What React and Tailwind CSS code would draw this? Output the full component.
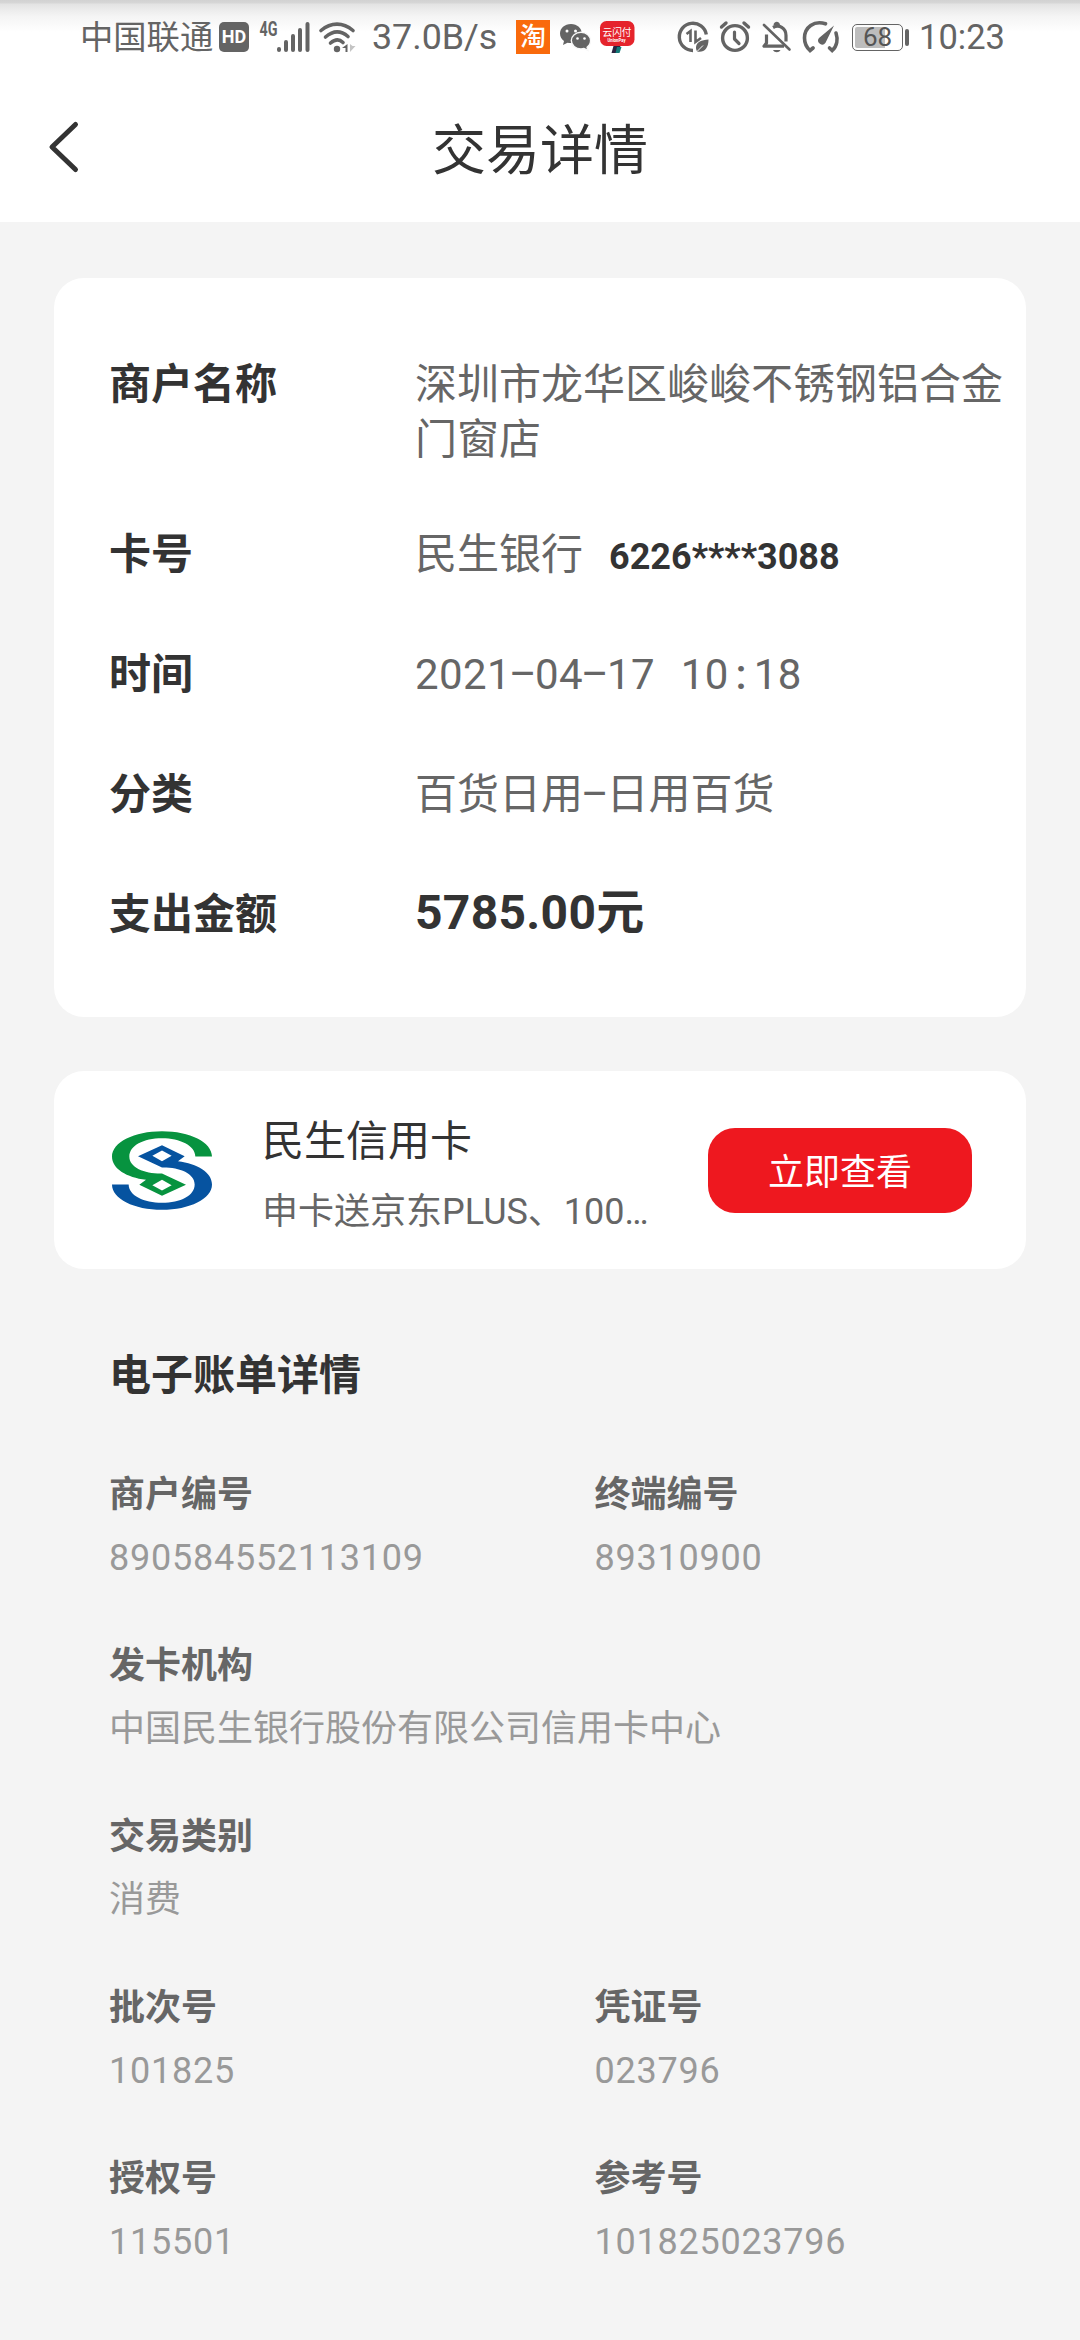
import React from "react";

const INK = "#646464";

function HdBadge() {
  return (
    <div className="ml-[6px] flex h-[30px] w-[30px] items-center justify-center rounded-[5px] bg-[#646464] text-[18px] leading-none font-bold text-white">
      HD
    </div>
  );
}

function SignalIcon() {
  return (
    <svg className="ml-[9px] shrink-0" width="53" height="46" viewBox="258 13 53 46">
      <text x="259.500" y="35" fontSize="19.500" fontWeight="700" fill={INK} textLength="18" lengthAdjust="spacingAndGlyphs">4G</text>
      <g stroke={INK} strokeWidth="4" strokeLinecap="round">
        <path d="M279 48v1M286 41v8M293 35v14M300 29v20M307.500 23v26" />
      </g>
    </svg>
  );
}

function WifiIcon() {
  return (
    <svg className="ml-[7px] shrink-0" width="40" height="32" viewBox="318 20 40 32">
      <g fill="none" stroke={INK} strokeWidth="3.600" strokeLinecap="round">
        <path d="M321 29.500C331 21 343 21 353 29.500" />
        <path d="M325.500 36C333 29.500 341 29.500 348 35.500" />
        <path d="M330.500 42C335 38 339.500 38 343 41.500" />
      </g>
      <circle cx="337" cy="48" r="3.200" fill={INK} />
      <path d="M342 47l5.500-4v8h-2v-4z" fill={INK} />
      <path d="M350 43v8l5.500-6h-3z" fill="#c4c4c4" />
    </svg>
  );
}

function WechatIcon() {
  return (
    <svg className="ml-[9px] shrink-0" width="32" height="32" viewBox="559 20 32 32">
      <path d="M571 23c-6.500 0-11 4.300-11 9.600 0 3.100 1.500 5.700 4 7.400l-1 4 4.500-2.300c1.200.3 2.300.4 3.500.4 6.300 0 10.800-4.300 10.800-9.500C581.800 27.300 577.300 23 571 23z" fill={INK} />
      <path d="M581 31.200c-5.400 0-9.700 3.800-9.700 8.400s4.300 8.300 9.700 8.300c1.100 0 2.100-.1 3-.4l4 2-.9-3.200c2.200-1.600 3.500-4 3.500-6.700 0-4.600-4.200-8.400-9.600-8.400z" fill={INK} stroke="#f8f8f8" strokeWidth="1.400" />
      <g fill="#fff">
        <circle cx="567" cy="30" r="1.500" />
        <circle cx="575.500" cy="30" r="1.500" />
        <circle cx="577.500" cy="37.500" r="1.300" />
        <circle cx="584.500" cy="37.500" r="1.300" />
      </g>
    </svg>
  );
}

function QuickPassIcon() {
  return (
    <svg className="ml-[8px] shrink-0" width="36" height="34" viewBox="599 18 36 34">
      <path d="M613.500 44h7l-2 7h-7z" fill="#2b2440" />
      <path d="M617 45h4.500l-2 6h-4z" fill="#147a78" />
      <rect x="600" y="19" width="34.500" height="25" rx="6.500" fill="#e5242c" />
      <text x="602.500" y="33.500" fontSize="10" fill="#fff" textLength="29" lengthAdjust="spacingAndGlyphs">云闪付</text>
      <text x="607.500" y="39.500" fontSize="5" fontWeight="700" fill="#fff" textLength="18" lengthAdjust="spacingAndGlyphs">UnionPay</text>
    </svg>
  );
}

function DataSaverIcon() {
  return (
    <svg className="ml-[41px] shrink-0" width="34" height="34" viewBox="676 19 34 34">
      <path d="M706.300 33.500A13.600 13.600 0 1 0 693 49.500" fill="none" stroke={INK} strokeWidth="3.400" />
      <path d="M686.500 33l4-3v11M695.500 29.500v11.500l5.500-4" fill="none" stroke={INK} strokeWidth="2.600" />
      <path d="M708.500 38.500c-7 .5-12 2.500-12.500 7.500-.1 2 .3 3 1.200 4.500 7 1.200 11.300-3 11.300-12z" fill={INK} />
      <path d="M697 50.500l6-6" stroke="#fff" strokeWidth="1" />
    </svg>
  );
}

function AlarmIcon() {
  return (
    <svg className="ml-[8px] shrink-0" width="34" height="34" viewBox="718 19 34 34">
      <g fill="none" stroke={INK} strokeLinecap="round" strokeLinejoin="round">
        <circle cx="735" cy="37" r="12.400" strokeWidth="3.400" />
        <path d="M734.500 31v7l4.500 4.500" strokeWidth="3.200" />
        <path d="M721.500 26l4.500-4M748.500 26l-4.500-4" strokeWidth="3.400" />
      </g>
    </svg>
  );
}

function BellOffIcon() {
  return (
    <svg className="ml-[9px] shrink-0" width="32" height="34" viewBox="761 19 32 34">
      <g fill="none" stroke={INK} strokeWidth="3.200">
        <path d="M766.500 33.500v8.500l-2.500 3.200h20M773 26.500c6-3.500 13 .5 13 8v6" strokeLinejoin="round" />
        <path d="M764 24l25.500 24.500" strokeLinecap="round" strokeWidth="2.600" />
      </g>
      <path d="M773.500 24.500c0-5 6.500-5 6.500 0" fill={INK} />
      <path d="M773 49h7.500c-1.500 3-6 3-7.500 0z" fill={INK} />
    </svg>
  );
}

function GaugeIcon() {
  return (
    <svg className="ml-[9px] shrink-0" width="40" height="34" viewBox="802 19 40 34">
      <g fill="none" stroke={INK} strokeWidth="3.600" strokeLinecap="round">
        <path d="M825.500 22.800C814 19 804.500 26.500 804.500 37c0 5 2.200 9.500 5.500 12.500l3-2.500" />
        <path d="M836 32c2 6 1.200 13-3.800 17.500l-2.700-2.500" />
      </g>
      <path d="M834 24.500l-8.500 17.300a4 4 0 1 1-6.500-4.800z" fill={INK} />
    </svg>
  );
}

function Battery() {
  return (
    <div className="ml-[10px] flex shrink-0 items-center gap-[2px]">
      <div className="relative flex h-[27px] w-[51px] items-center justify-center rounded-[5px] border-[1.5px] border-[#646464] text-[26px] leading-none text-[#555]">
        <div className="absolute inset-y-[2px] left-[2px] w-[30px] rounded-l-[2px] bg-[#bdbdbd]" />
        <span className="relative">68</span>
      </div>
      <div className="h-[17px] w-[4px] rounded-[2px] bg-[#646464]" />
    </div>
  );
}

function StatusBar() {
  return (
    <div className="flex h-[74px] items-center bg-white bg-[linear-gradient(to_bottom,#d2d2d2_0px,#d6d6d6_3px,#e3e3e3_4px,#f4f4f4_16px,#ffffff_32px)] pl-[80px] text-[#646464]">
      <span className="w-[133px] shrink-0 pt-[2px] text-[33.3px] leading-none whitespace-nowrap">中国联通</span>
      <HdBadge />
      <SignalIcon />
      <WifiIcon />
      <span className="ml-[14px] w-[126px] shrink-0 pt-[2px] text-[35.8px] leading-none whitespace-nowrap">37.0B/s</span>
      <div className="ml-[18px] flex h-[34px] w-[34px] shrink-0 items-center justify-center bg-[#f96a0c] text-[26px] leading-none font-medium text-white">
        淘
      </div>
      <WechatIcon />
      <QuickPassIcon />
      <DataSaverIcon />
      <AlarmIcon />
      <BellOffIcon />
      <GaugeIcon />
      <Battery />
      <span className="ml-[10px] pt-[1px] text-[34.5px] leading-none whitespace-nowrap">10:23</span>
    </div>
  );
}

function Header() {
  return (
    <header className="relative flex h-[148px] items-center justify-center bg-white">
      <svg className="absolute top-[45px] left-[46px]" width="36" height="56" viewBox="46 119 36 56">
        <path d="M75.500 124.500L52 147L75.500 169.500" fill="none" stroke="#333" strokeWidth="5" strokeLinecap="round" strokeLinejoin="round" />
      </svg>
      <h1 className="pt-[8px] text-[54px] leading-none text-[#333]">交易详情</h1>
    </header>
  );
}

function Row({ label, tall, children }) {
  return (
    <div className={tall ? "flex h-[110px] leading-[55px]" : "flex h-[55px] leading-[55px]"}>
      <div className="w-[306px] shrink-0 text-[42px] font-bold text-[#333]">{label}</div>
      <div className="min-w-0 flex-1 text-[42px] text-[#666]">{children}</div>
    </div>
  );
}

function Dash() {
  return <span className="mx-[-2px]">–</span>;
}

function MinshengLogo() {
  const half =
    "M366 138C366 95 300 62 216 62C133 62 66 95 66 138C66 175 110 201 168 208L148 223L216 256L288 223L216 189C165 190 118 172 118 138C118 105 160 83 216 83C270 83 316 105 316 138ZM216 208L245 224L216 240L187 224Z";
  return (
    <svg width="100" height="79" viewBox="66 61.500 300 237" className="shrink-0">
      <path d={half} fill="#07933f" fillRule="evenodd" />
      <path d={half} fill="#0653a0" fillRule="evenodd" transform="rotate(180 216 180)" />
    </svg>
  );
}

function Detail({ label, value, numeric }) {
  return (
    <div className="w-[486px]">
      <div className="h-[63px] text-[36px] leading-[56px] font-bold text-[#666]">{label}</div>
      <div className={numeric ? "text-[36px] leading-[56px] tracking-[0.75px] text-[#999]" : "text-[36px] leading-[56px] whitespace-nowrap text-[#999]"}>
        {value}
      </div>
    </div>
  );
}

const DETAILS = [
  [["商户编号", "890584552113109", true], ["终端编号", "89310900", true]],
  [["发卡机构", "中国民生银行股份有限公司信用卡中心", false]],
  [["交易类别", "消费", false]],
  [["批次号", "101825", true], ["凭证号", "023796", true]],
  [["授权号", "115501", true], ["参考号", "101825023796", true]],
];

export default function App() {
  return (
    <div className="h-[2340px] w-[1080px] overflow-hidden bg-[#f4f4f4] font-[Roboto,'Noto_Sans_CJK_SC',sans-serif]" lang="zh-CN">
      <StatusBar />
      <Header />

      <section className="mx-[54px] mt-[56px] h-[739px] rounded-[30px] bg-white pt-[79px] pl-[55px]">
        <Row label="商户名称" tall>深圳市龙华区峻峻不锈钢铝合金门窗店</Row>
        <div className="mt-[60px] flex flex-col gap-[65px]">
          <Row label="卡号">
            民生银行<span className="ml-[26px] text-[36px] font-bold text-[#333]">6226****3088</span>
          </Row>
          <Row label="时间">
            <span className="tracking-[0.4px] [word-spacing:15px]">
              2021<Dash />04<Dash />17 10<span className="mx-[6.7px] font-medium">:</span>18
            </span>
          </Row>
          <Row label="分类">百货日用<Dash />日用百货</Row>
          <Row label="支出金额">
            <div className="mt-[-2px] text-[48px] font-bold tracking-[0.3px] text-[#333]">5785.00元</div>
          </Row>
        </div>
      </section>

      <section className="mx-[54px] mt-[54px] flex h-[198px] items-center rounded-[30px] bg-white pr-[54px] pl-[58px]">
        <MinshengLogo />
        <div className="ml-[50px] w-[390px] pt-[13px] whitespace-nowrap">
          <div className="text-[42px] leading-[70px] text-[#333]">民生信用卡</div>
          <div className="text-[36px] leading-[70px] text-[#666]">申卡送京东PLUS、100…</div>
        </div>
        <button className="ml-auto h-[85px] w-[264px] rounded-[27px] bg-[#ee181f] pt-[6px] text-[36px] leading-none text-white">
          立即查看
        </button>
      </section>

      <section className="pt-[79px] pl-[109px]">
        <h2 className="text-[42px] leading-[56px] font-bold text-[#333]">电子账单详情</h2>
        <div className="mt-[63px] flex flex-col gap-[52px]">
          {DETAILS.map((row) => (
            <div key={row[0][0]} className="flex h-[119px]">
              {row.map(([label, value, numeric]) => (
                <Detail key={label} label={label} value={value} numeric={numeric} />
              ))}
            </div>
          ))}
        </div>
      </section>
    </div>
  );
}
